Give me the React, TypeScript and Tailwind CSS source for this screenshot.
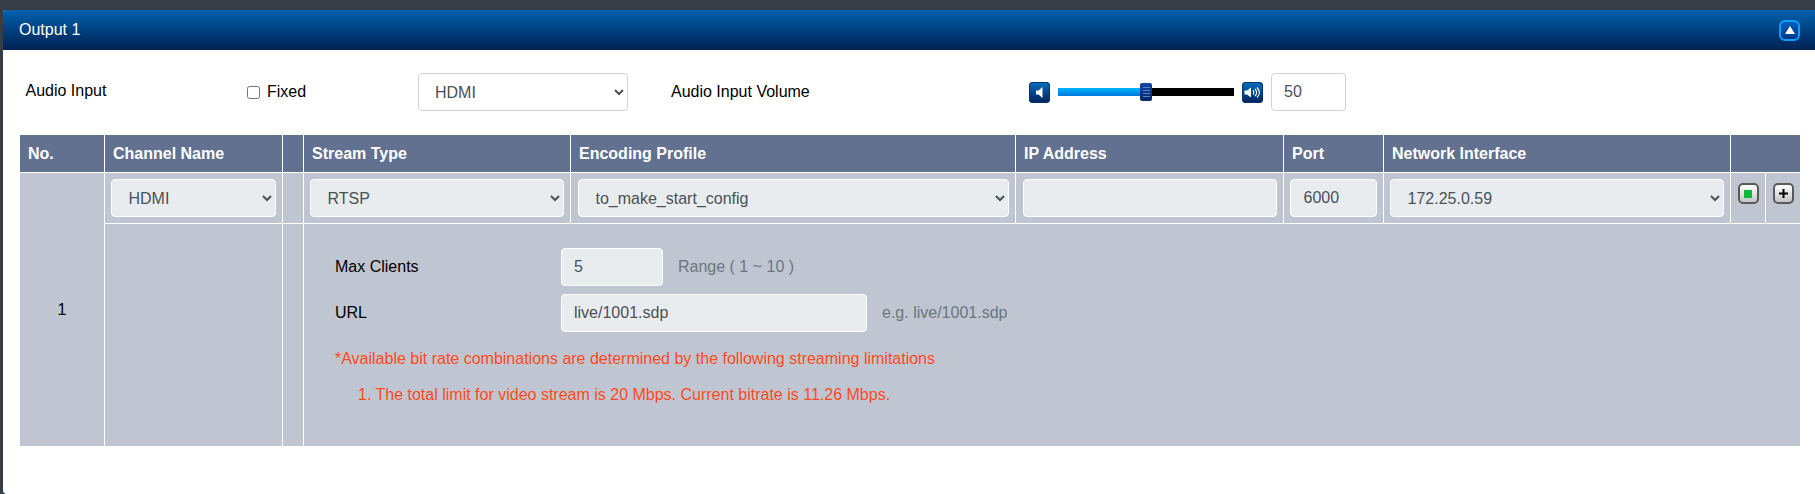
import { ReactNode } from "react";

const fieldClass =
  "h-[38px] w-full rounded border border-white bg-[#e9ecef] px-[12.500px] text-[#495057] outline-none";

function SquareButton({ children }: { children: ReactNode }) {
  return (
    <span className="flex h-[21px] w-[21px] items-center justify-center rounded-[4px] bg-gradient-to-b from-[#0a6fc0] to-[#00225c] shadow-[inset_0_0_0_1px_#03346f]">
      {children}
    </span>
  );
}

function ActionButton({ children }: { children: ReactNode }) {
  return (
    <span className="mx-auto flex h-[21px] w-[21px] items-center justify-center rounded-[5px] border-2 border-[#5a5a5a] bg-gradient-to-b from-white to-[#c4c4c4]">
      {children}
    </span>
  );
}

function VolumeSlider() {
  return (
    <div className="flex items-center">
      <SquareButton>
        <svg width="11" height="13" viewBox="0 0 11 13" fill="white">
          <path d="M2 4.500h2.500l4-3.500v11l-4-3.500h-2.500z" />
        </svg>
      </SquareButton>
      <div className="relative mx-2 flex h-[8px] w-[176px]">
        <div className="h-full w-[88px] bg-gradient-to-b from-[#00b4ff] to-[#0078dc]" />
        <div className="h-full flex-1 bg-black" />
        <div className="absolute top-[-5px] left-[82px] flex h-[18px] w-[12px] flex-col items-center justify-center gap-[2px] rounded-[2px] bg-gradient-to-b from-[#0d47a8] to-[#04276a]">
          <span className="h-px w-[7px] bg-[#5c83c4]" />
          <span className="h-px w-[7px] bg-[#5c83c4]" />
          <span className="h-px w-[7px] bg-[#5c83c4]" />
          <span className="h-px w-[7px] bg-[#5c83c4]" />
        </div>
      </div>
      <SquareButton>
        <svg width="17" height="13" viewBox="0 0 17 13" fill="none">
          <path d="M0.500 4.500h2.500l4-3v10l-4-3h-2.500z" fill="white" />
          <path d="M9 4.500c1 1 1 3 0 4M11 3c2 2 2 5 0 7M13 1.500c3 3 3 7 0 10" stroke="white" strokeWidth="1.200" />
        </svg>
      </SquareButton>
    </div>
  );
}

function AudioRow() {
  return (
    <div className="flex h-[85px] items-center pb-px pl-[22.500px] text-black">
      <span className="mb-[2px] w-[221.500px]">Audio Input</span>
      <label className="flex w-[171px] items-center">
        <input type="checkbox" className="mr-[7px] h-[13px] w-[13px]" />
        Fixed
      </label>
      <select className="h-[38px] w-[210px] rounded border border-[#ced4da] bg-white px-3 text-[#495057]">
        <option>HDMI</option>
      </select>
      <span className="ml-[43px] w-[358px]">Audio Input Volume</span>
      <VolumeSlider />
      <input
        readOnly
        value="50"
        className="ml-2 h-[38px] w-[75px] rounded border border-[#ced4da] bg-white px-3 text-[#495057]"
      />
    </div>
  );
}

function Head({ label, colSpan }: { label?: string; colSpan?: number }) {
  return (
    <th
      colSpan={colSpan}
      className="h-[38px] border-r border-b border-white bg-[#62718f] px-2 text-left font-bold text-white last:border-r-0"
    >
      {label}
    </th>
  );
}

function Cell({ children, wide }: { children?: ReactNode; wide?: boolean }) {
  return (
    <td className={`border-r border-b border-white bg-[#bfc6d1] py-[6px] pr-[6.500px] ${wide ? "pl-[7px]" : "pl-[6px]"}`}>
      {children}
    </td>
  );
}

function StreamTable() {
  return (
    <table className="ml-[17px] w-[1780px] table-fixed border-separate border-spacing-0">
      <colgroup>
        <col className="w-[85px]" />
        <col className="w-[178px]" />
        <col className="w-[21px]" />
        <col className="w-[267px]" />
        <col className="w-[445px]" />
        <col className="w-[268px]" />
        <col className="w-[100px]" />
        <col className="w-[347px]" />
        <col className="w-[35px]" />
        <col className="w-[34px]" />
      </colgroup>
      <thead>
        <tr>
          <Head label="No." />
          <Head label="Channel Name" />
          <Head />
          <Head label="Stream Type" />
          <Head label="Encoding Profile" />
          <Head label="IP Address" />
          <Head label="Port" />
          <Head label="Network Interface" />
          <Head colSpan={2} />
        </tr>
      </thead>
      <tbody>
        <tr className="h-[51px]">
          <td rowSpan={2} className="border-r border-white bg-[#bfc6d1] text-center text-black">
            1
          </td>
          <Cell>
            <select className={fieldClass}>
              <option>HDMI</option>
            </select>
          </Cell>
          <Cell />
          <Cell>
            <select className={fieldClass}>
              <option>RTSP</option>
            </select>
          </Cell>
          <Cell wide>
            <select className={fieldClass}>
              <option>to_make_start_config</option>
            </select>
          </Cell>
          <Cell wide>
            <input readOnly className={fieldClass} />
          </Cell>
          <Cell>
            <input readOnly value="6000" className={fieldClass} />
          </Cell>
          <Cell>
            <select className={fieldClass}>
              <option>172.25.0.59</option>
            </select>
          </Cell>
          <td className="border-r border-b border-white bg-[#bfc6d1] pt-[10px] align-top">
            <ActionButton>
              <span className="h-[8px] w-[8px] bg-[#0cb83c]" />
            </ActionButton>
          </td>
          <td className="border-b border-white bg-[#bfc6d1] pt-[10px] align-top">
            <ActionButton>
              <svg width="11" height="11" viewBox="0 0 11 11" fill="black">
                <path d="M4.500 1h2v3.500h3.500v2h-3.500v3.500h-2v-3.500h-3.500v-2h3.500z" />
              </svg>
            </ActionButton>
          </td>
        </tr>
        <tr>
          <td className="border-r border-white bg-[#bfc6d1]" />
          <td className="border-r border-white bg-[#bfc6d1]" />
          <td colSpan={7} className="h-[222px] bg-[#bfc6d1] pt-6 pl-[31px] align-top">
            <div className="flex items-center">
              <span className="w-[226px] text-black">Max Clients</span>
              <input readOnly value="5" className={`${fieldClass} !w-[102px] !px-3`} />
              <span className="ml-[15px] text-[#6c757d]">Range ( 1 ~ 10 )</span>
            </div>
            <div className="mt-2 flex items-center">
              <span className="w-[226px] text-black">URL</span>
              <input readOnly value="live/1001.sdp" className={`${fieldClass} !w-[306px] !px-3`} />
              <span className="ml-[15px] text-[#6c757d]">e.g. live/1001.sdp</span>
            </div>
            <p className="mt-[15px] text-[#ff4a20]">
              *Available bit rate combinations are determined by the following streaming limitations
            </p>
            <p className="mt-3 pl-[23px] text-[#ff4a20]">
              1. The total limit for video stream is 20 Mbps. Current bitrate is 11.26 Mbps.
            </p>
          </td>
        </tr>
      </tbody>
    </table>
  );
}

export default function App() {
  return (
    <div className="flex h-[494px] w-[1815px] flex-col overflow-hidden bg-[#383c44] pt-[10px] pl-[3px] font-['Liberation_Sans',Arial,sans-serif] text-base">
      <div className="flex-1 rounded-tl-[4px] rounded-bl-[4px] bg-white">
        <div className="flex h-[40px] items-center justify-between rounded-tl-[4px] bg-gradient-to-b from-[#0062b0] to-[#002153] pr-[15px] pl-[16px] text-white">
          <span>Output 1</span>
          <span className="flex h-[21px] w-[21px] items-center justify-center rounded-[6px] border-2 border-[#0a9cff] bg-gradient-to-b from-[#0060b8] to-[#00348c]">
            <svg width="10" height="8" viewBox="0 0 10 8" fill="white">
              <path d="M5 0l5 8h-10z" />
            </svg>
          </span>
        </div>
        <AudioRow />
        <StreamTable />
      </div>
    </div>
  );
}
